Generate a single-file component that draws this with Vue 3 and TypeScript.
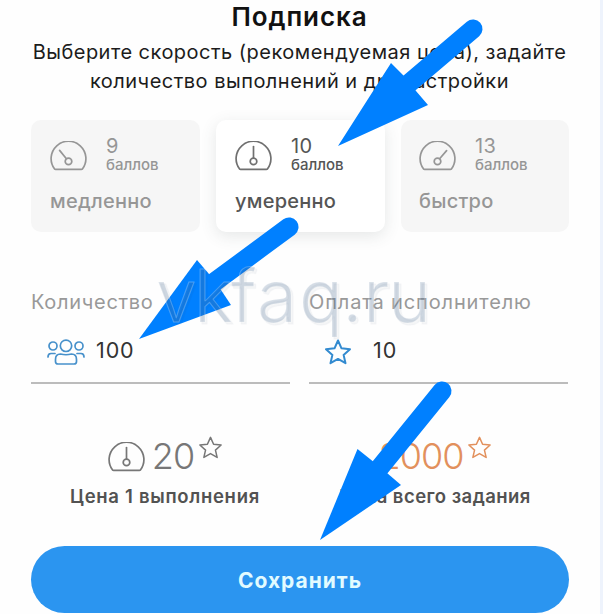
<script setup lang="ts">
import { ref } from 'vue'

interface Speed {
  id: string
  points: number
  label: string
  needle: string
}

interface Arrow {
  head: string
  from: [number, number]
  to: [number, number]
}

const speeds: Speed[] = [
  { id: 'slow', points: 9, label: 'медленно', needle: 'M9.6 9.4 16.4 17.8' },
  { id: 'medium', points: 10, label: 'умеренно', needle: 'M18.5 5.5V17' },
  { id: 'fast', points: 13, label: 'быстро', needle: 'M27.6 9.6 20.6 17.8' },
]

const selected = ref('medium')

const gaugePath = 'M4.6 28.1A17.4 17.4 0 1 1 32.4 28.1Q32 28.4 31.4 28.4H5.6Q5 28.4 4.6 28.1Z'
const starPath = 'M13 1.5 16.5 9.3 25 10.2 18.6 15.9 20.5 24.2 13 19.9 5.5 24.2 7.4 15.9 1 10.2 9.5 9.3Z'

const arrows: Arrow[] = [
  { head: '338,146 391,63 404,76 416,91 428,105', from: [473, 29], to: [400, 91] },
  { head: '139,339 197,260 209,274 221,290 231,305', from: [289, 227], to: [205, 289] },
  { head: '320,540 357.5,449 372.5,461 387,473 401,485', from: [442, 391], to: [373, 476] },
]
</script>

<template>
  <div class="page">
    <h1 class="title">Подписка</h1>
    <p class="subtitle">
      Выберите скорость (рекомендуемая цена), задайте<br>
      количество выполнений и др. настройки
    </p>

    <div class="speeds">
      <button
        v-for="speed in speeds"
        :key="speed.id"
        :class="['speed', { active: selected === speed.id }]"
        @click="selected = speed.id"
      >
        <span class="speed-top">
          <svg class="gauge" viewBox="0 0 37 30">
            <path :d="gaugePath" />
            <path :d="speed.needle" />
            <circle cx="18.5" cy="20.4" r="3.3" />
          </svg>
          <span class="speed-points">
            <span class="points-value">{{ speed.points }}</span>
            <span class="points-unit">баллов</span>
          </span>
        </span>
        <span class="speed-label">{{ speed.label }}</span>
      </button>
    </div>

    <div class="fields">
      <div class="field">
        <div class="field-label">Количество</div>
        <div class="field-value">
          <svg class="people" viewBox="0 0 38 26">
            <circle cx="19" cy="6.8" r="5.7" />
            <circle cx="6" cy="7" r="4" />
            <circle cx="32" cy="7" r="4" />
            <path d="M8.5 22.5V20.5Q8.5 15 13.5 15Q19 16.500 24.500 15Q29.500 15 29.500 20.500V22.500Q29.500 25 27 25H11Q8.500 25 8.500 22.500Z" />
            <path d="M1 18Q1 14.500 4 14.500H8M37 18Q37 14.500 34 14.500H30" />
          </svg>
          <span>100</span>
        </div>
      </div>
      <div class="field">
        <div class="field-label pay">Оплата исполнителю</div>
        <div class="field-value pay">
          <svg class="star" viewBox="0 0 26 26"><path :d="starPath" /></svg>
          <span>10</span>
        </div>
      </div>
    </div>

    <div class="prices">
      <div class="price">
        <div class="price-value">
          <svg class="gauge" viewBox="0 0 37 30">
            <path :d="gaugePath" />
            <path d="M18.5 5.5V17" />
            <circle cx="18.5" cy="20.4" r="3.3" />
          </svg>
          <span class="amount">20</span>
          <svg class="star" viewBox="0 0 26 26"><path :d="starPath" /></svg>
        </div>
        <div class="price-label">Цена 1 выполнения</div>
      </div>
      <div class="price total">
        <div class="price-value">
          <span class="amount">2000</span>
          <svg class="star" viewBox="0 0 26 26"><path :d="starPath" /></svg>
        </div>
        <div class="price-label">Цена всего задания</div>
      </div>
    </div>

    <button class="save">Сохранить</button>

    <!-- Pointers and watermark lie over the form -->
    <svg class="overlay" viewBox="0 0 603 614">
      <g v-for="(arrow, i) in arrows" :key="i">
        <polygon :points="arrow.head" fill="#0080ff" />
        <line
          :x1="arrow.from[0]"
          :y1="arrow.from[1]"
          :x2="arrow.to[0]"
          :y2="arrow.to[1]"
          stroke="#0080ff"
          stroke-width="19"
          stroke-linecap="round"
        />
      </g>
      <text class="watermark" x="156 194 231 257 299 342 363 388" y="322">vkfaq.ru</text>
    </svg>
  </div>
</template>

<style>
body {
  background: #fefefe;
}
</style>

<style scoped>
.page {
  position: relative;
  box-sizing: border-box;
  width: 603px;
  height: 614px;
  padding: 1px 32px 0 31px;
  overflow: hidden;
  border-right: 3px solid #eef3fc;
  background: #fefefe;
  font-family: Inter, "Liberation Sans", sans-serif;
}

svg {
  flex-shrink: 0;
  fill: none;
  stroke-linejoin: round;
  stroke-linecap: round;
}

.title {
  margin: 0;
  font-size: 26px;
  line-height: 32px;
  font-weight: 600;
  letter-spacing: 0.9px;
  text-align: center;
  color: #111;
}

.subtitle {
  margin: 5px -20px 0;
  font-size: 20px;
  line-height: 29px;
  letter-spacing: 0.48px;
  text-align: center;
  white-space: nowrap;
  color: #1c1c1c;
}

.speeds {
  display: grid;
  grid-template-columns: 169px 169px 168px;
  column-gap: 16px;
  width: 538px;
  margin-top: 24px;
}

.speed {
  display: flex;
  flex-direction: column;
  height: 112px;
  padding: 16px 19px 0;
  border: none;
  border-radius: 10px;
  background: #f6f6f6;
  font-family: inherit;
  text-align: left;
  color: #969696;
  cursor: pointer;
}

.speed.active {
  background: #fff;
  color: #555;
  box-shadow: 0 4px 16px rgba(60, 80, 80, 0.13);
}

.speed:last-child {
  padding-left: 18px;
}

.speed-top {
  display: flex;
  gap: 19px;
}

.gauge {
  width: 37px;
  height: 30px;
  margin-top: 5px;
  stroke: currentColor;
  stroke-width: 1.7;
}

.active .gauge {
  stroke: #707070;
}

.speed-points {
  display: flex;
  flex-direction: column;
}

.points-value {
  font-size: 20px;
  line-height: 20px;
  letter-spacing: 0.3px;
}

.points-unit {
  font-size: 15px;
  line-height: 18px;
  font-weight: 500;
}

.speed-label {
  margin-top: 14px;
  font-size: 20px;
  line-height: 26px;
  font-weight: 500;
  letter-spacing: 0.25px;
}

.fields {
  display: grid;
  grid-template-columns: 259px 259px;
  column-gap: 19px;
  margin-top: 58px;
}

.field {
  box-sizing: border-box;
  height: 94px;
  border-bottom: 2px solid #bcbcbc;
}

.field-label {
  font-size: 20px;
  line-height: 24px;
  letter-spacing: 0.7px;
  white-space: nowrap;
  color: #999;
}

.field-label.pay {
  letter-spacing: 0.87px;
}

.field-value {
  display: flex;
  gap: 11px;
  margin-top: 23px;
  padding-left: 16px;
  font-size: 21.5px;
  line-height: 26px;
  letter-spacing: 0.9px;
  color: #333;
}

.field-value.pay {
  gap: 22px;
}

.field-value svg {
  stroke: #4791cb;
  stroke-width: 1.7;
}

.people {
  width: 38px;
  height: 26px;
  margin-top: 2px;
}

.field-value .star {
  width: 26px;
  height: 26px;
  margin-top: 2px;
  stroke: #338bd0;
  stroke-width: 2;
}

.prices {
  display: flex;
  justify-content: space-between;
  width: 538px;
  margin-top: 52px;
}

.price {
  width: 268px;
  color: #777;
}

.price-value {
  display: flex;
  justify-content: center;
  height: 40px;
}

.price-value .gauge {
  margin-top: 6px;
  margin-right: 7px;
}

.amount {
  font-size: 36px;
  line-height: 40px;
  font-weight: 300;
  letter-spacing: -1px;
}

.price-value .star {
  width: 23px;
  height: 23px;
  margin-left: 5px;
  stroke: currentColor;
  stroke-width: 1.7;
}

.total .price-value {
  color: #e2905c;
}

.price-label {
  margin-top: 8px;
  font-size: 18.5px;
  line-height: 24px;
  font-weight: 600;
  letter-spacing: 0.7px;
  text-align: center;
  white-space: nowrap;
  color: #525252;
}

.total .price-label {
  letter-spacing: 0.45px;
}

.save {
  display: block;
  width: 538px;
  height: 67px;
  margin-top: 38px;
  padding: 1px 0 0;
  border: none;
  border-radius: 34px;
  background: #2b95f0;
  font-family: inherit;
  font-size: 21px;
  font-weight: 700;
  letter-spacing: 1px;
  color: #e2fbff;
  cursor: pointer;
}

.overlay {
  position: absolute;
  top: 0;
  left: 0;
  width: 603px;
  height: 614px;
  pointer-events: none;
}

.watermark {
  font-family: Inter, "Liberation Sans", sans-serif;
  font-size: 73px;
  font-weight: 300;
  fill: rgba(80, 112, 150, 0.24);
  stroke: rgba(255, 255, 255, 0.25);
  stroke-width: 1;
  text-shadow: 2px 2px 1px rgba(60, 80, 110, 0.2);
}
</style>
